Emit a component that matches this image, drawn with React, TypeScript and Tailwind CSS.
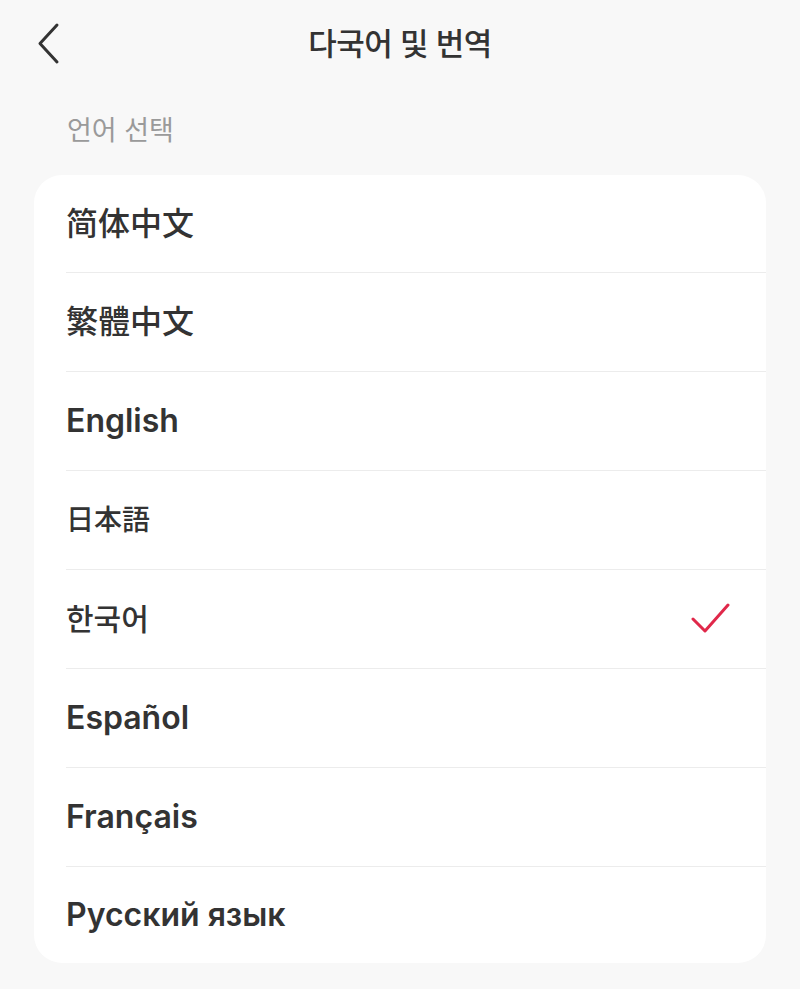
import React from "react";

const langs: { label: string; cls: string }[] = [
  { label: "简体中文", cls: "text-[32px] font-medium" },
  { label: "繁體中文", cls: "text-[32px] font-medium" },
  { label: "English", cls: "text-[32px] font-semibold" },
  { label: "日本語", cls: "text-[28px] font-medium" },
  { label: "한국어", cls: "text-[30px] font-medium" },
  { label: "Español", cls: "text-[32px] font-semibold" },
  { label: "Français", cls: "text-[32px] font-semibold" },
  { label: "Русский язык", cls: "text-[32px] font-semibold" },
];

const font = {
  fontFamily:
    '"Inter", "Noto Sans CJK KR", "Noto Sans CJK SC", sans-serif',
};

export default function App() {
  return (
    <div
      className="w-[800px] h-[989px] bg-[#f8f8f8] text-[#333333] overflow-hidden"
      style={font}
    >
      <div className="relative h-[86px] flex items-center justify-center">
        <button className="absolute left-[36px] top-[22px] w-[26px] h-[44px] flex items-center justify-center">
          <svg width="26" height="44" viewBox="0 0 26 44" fill="none">
            <path
              d="M21 3 L4 21.5 L21 40"
              stroke="#333333"
              strokeWidth="3"
              strokeLinecap="round"
              strokeLinejoin="round"
            />
          </svg>
        </button>
        <h1 className="text-[31px] font-medium tracking-[-0.5px] leading-none">
          다국어 및 번역
        </h1>
      </div>
      <div className="h-[89px] flex items-center pl-[67px]">
        <span className="text-[27px] text-[#9a9a9a] leading-none">언어 선택</span>
      </div>
      <div className="mx-[34px] bg-white rounded-[28px] overflow-hidden">
        {langs.map((l, i) => (
          <div
            key={l.label}
            className={
              "ml-[32px] flex items-center justify-between pr-[36px] " +
              (i === 0
                ? "h-[97px]"
                : i === langs.length - 1
                ? "h-[97px] border-t border-[#ececec]"
                : "h-[99px] border-t border-[#ececec]")
            }
          >
            <span className={"leading-none " + l.cls}>{l.label}</span>
            {l.label === "한국어" && (
              <svg width="42" height="34" viewBox="0 0 42 34" fill="none">
                <path
                  d="M5 17 L17 29 L40 3"
                  stroke="#e0284a"
                  strokeWidth="3"
                  strokeLinecap="round"
                  strokeLinejoin="round"
                />
              </svg>
            )}
          </div>
        ))}
      </div>
    </div>
  );
}
